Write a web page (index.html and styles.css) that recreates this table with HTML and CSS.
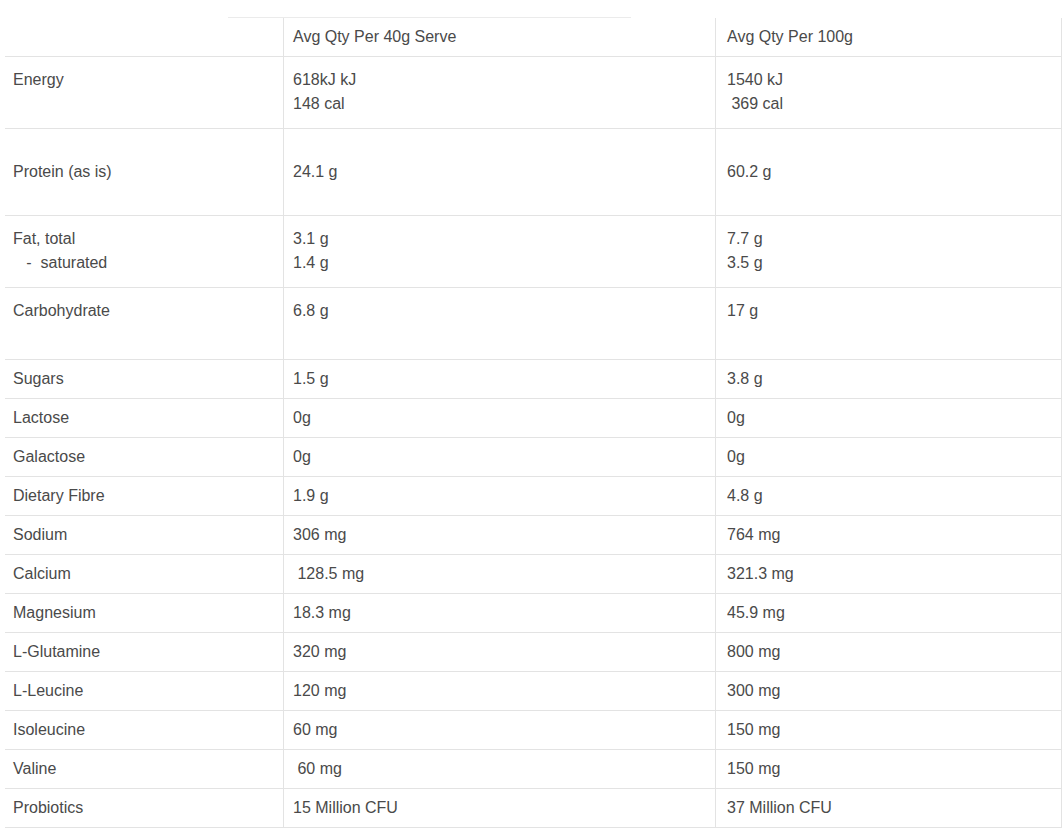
FILE: index.html
```html
<!DOCTYPE html>
<html lang="en">
<head>
<meta charset="utf-8">
<title>Nutrition Information</title>
<link rel="stylesheet" href="styles.css">
</head>
<body>
<div class="page">
  <div class="topline"></div>
  <table class="nutrition">
    <tbody>
      <tr class="row-head">
        <td class="c1"></td>
        <td class="c2">Avg Qty Per 40g Serve</td>
        <td class="c3">Avg Qty Per 100g</td>
      </tr>
      <tr class="row-double">
        <td class="c1">Energy</td>
        <td class="c2">618kJ kJ<br>148 cal</td>
        <td class="c3">1540 kJ<br>&nbsp;369 cal</td>
      </tr>
      <tr class="row-tall">
        <td class="c1">Protein (as is)</td>
        <td class="c2">24.1 g</td>
        <td class="c3">60.2 g</td>
      </tr>
      <tr class="row-double">
        <td class="c1">Fat, total<br>&nbsp;&nbsp;&nbsp;-&nbsp;&nbsp;saturated</td>
        <td class="c2">3.1 g<br>1.4 g</td>
        <td class="c3">7.7 g<br>3.5 g</td>
      </tr>
      <tr class="row-double">
        <td class="c1">Carbohydrate</td>
        <td class="c2">6.8 g</td>
        <td class="c3">17 g</td>
      </tr>
      <tr>
        <td class="c1">Sugars</td>
        <td class="c2">1.5 g</td>
        <td class="c3">3.8 g</td>
      </tr>
      <tr>
        <td class="c1">Lactose</td>
        <td class="c2">0g</td>
        <td class="c3">0g</td>
      </tr>
      <tr>
        <td class="c1">Galactose</td>
        <td class="c2">0g</td>
        <td class="c3">0g</td>
      </tr>
      <tr>
        <td class="c1">Dietary Fibre</td>
        <td class="c2">1.9 g</td>
        <td class="c3">4.8 g</td>
      </tr>
      <tr>
        <td class="c1">Sodium</td>
        <td class="c2">306 mg</td>
        <td class="c3">764 mg</td>
      </tr>
      <tr>
        <td class="c1">Calcium</td>
        <td class="c2">&nbsp;128.5 mg</td>
        <td class="c3">321.3 mg</td>
      </tr>
      <tr>
        <td class="c1">Magnesium</td>
        <td class="c2">18.3 mg</td>
        <td class="c3">45.9 mg</td>
      </tr>
      <tr>
        <td class="c1">L-Glutamine</td>
        <td class="c2">320 mg</td>
        <td class="c3">800 mg</td>
      </tr>
      <tr>
        <td class="c1">L-Leucine</td>
        <td class="c2">120 mg</td>
        <td class="c3">300 mg</td>
      </tr>
      <tr>
        <td class="c1">Isoleucine</td>
        <td class="c2">60 mg</td>
        <td class="c3">150 mg</td>
      </tr>
      <tr>
        <td class="c1">Valine</td>
        <td class="c2">&nbsp;60 mg</td>
        <td class="c3">150 mg</td>
      </tr>
      <tr>
        <td class="c1">Probiotics</td>
        <td class="c2">15 Million CFU</td>
        <td class="c3">37 Million CFU</td>
      </tr>
    </tbody>
  </table>
</div>
</body>
</html>
```
FILE: styles.css
```css
html, body {
  margin: 0;
  padding: 0;
  background: #ffffff;
}

.page {
  padding: 0 2px 0 5px;
  font-family: "Liberation Sans", Arial, sans-serif;
  font-size: 16px;
  color: #4a4a4a;
}

.topline {
  margin-left: 223px;
  width: 403px;
  height: 18px;
  border-bottom: 1px solid #ebebeb;
  box-sizing: border-box;
}

.nutrition {
  width: 1057px;
  border-collapse: collapse;
  table-layout: fixed;
}

.nutrition td {
  padding: 7px 8px;
  line-height: 24px;
  vertical-align: middle;
  border-bottom: 1px solid #e3e3e3;
  text-align: left;
  white-space: nowrap;
}

.nutrition .c1 {
  width: 262px;
  padding-left: 8px;
}

.nutrition .c2 {
  width: 414px;
  border-left: 1px solid #e3e3e3;
  padding-left: 9px;
}

.nutrition .c3 {
  border-left: 1px solid #e3e3e3;
  border-right: 1px solid #e3e3e3;
  padding-left: 11px;
}

.row-double td {
  vertical-align: top;
  height: 48px;
  padding-top: 11px;
  padding-bottom: 12px;
}

.row-tall td {
  padding-top: 31px;
  padding-bottom: 31px;
}
```
